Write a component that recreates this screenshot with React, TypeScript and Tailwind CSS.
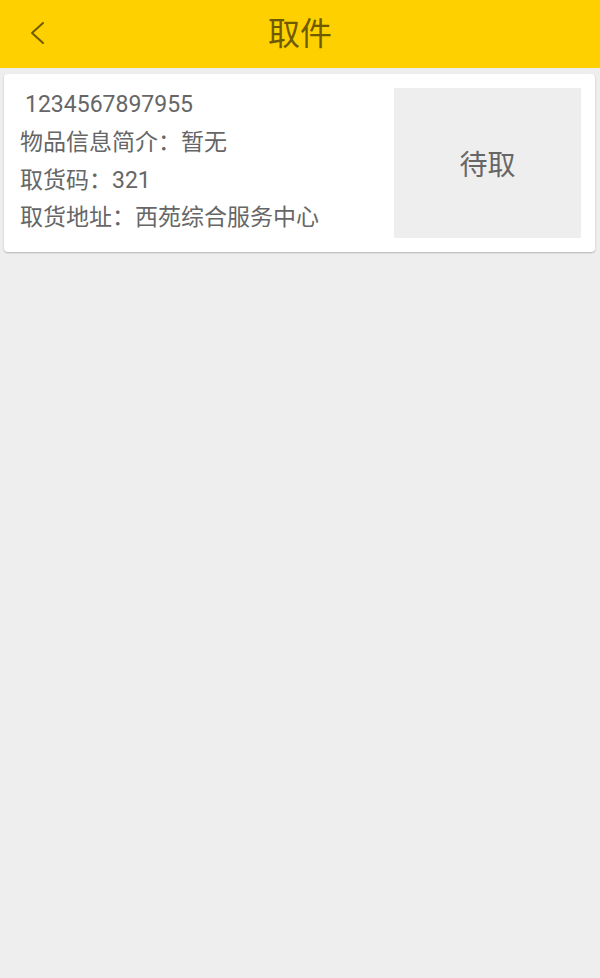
import React from "react";

const parcel = {
  number: "1234567897955",
  intro: "暂无",
  code: "321",
  address: "西苑综合服务中心",
  status: "待取",
};

function BackIcon() {
  return (
    <svg width="16" height="24" viewBox="0 0 16 24" fill="none">
      <path d="M14 2 L3 12 L14 22" stroke="#6e5b00" strokeWidth="2" strokeLinecap="round" strokeLinejoin="round" />
    </svg>
  );
}

function ParcelCard() {
  return (
    <div className="ml-[4px] mr-[5px] mt-[6px] flex items-center justify-between rounded-[4px] bg-white py-[14px] pl-[16px] pr-[14px] shadow-[0_1px_2px_rgba(0,0,0,0.25)]">
      <div className="-mt-[3px] flex flex-col text-[23px] leading-[37.6px] text-[#666666]">
        <p className="pl-[5px]">{parcel.number}</p>
        <p>物品信息简介：{parcel.intro}</p>
        <p>取货码：{parcel.code}</p>
        <p>取货地址：{parcel.address}</p>
      </div>
      <div className="flex h-[150px] w-[187px] items-center justify-center bg-[#eeeeee] pt-[6px] text-[28px] text-[#666666]">
        {parcel.status}
      </div>
    </div>
  );
}

export default function App() {
  return (
    <div
      className="min-h-[978px] w-[600px] bg-[#eeeeee]"
      style={{ fontFamily: 'Roboto, "Noto Sans CJK SC", sans-serif' }}
    >
      <header className="relative flex h-[68px] items-center justify-center bg-[#ffd000]">
        <button className="absolute left-[29px] top-[21px] flex">
          <BackIcon />
        </button>
        <h1 className="text-[32px] text-[#6e5b00]">取件</h1>
      </header>
      <ParcelCard />
    </div>
  );
}
